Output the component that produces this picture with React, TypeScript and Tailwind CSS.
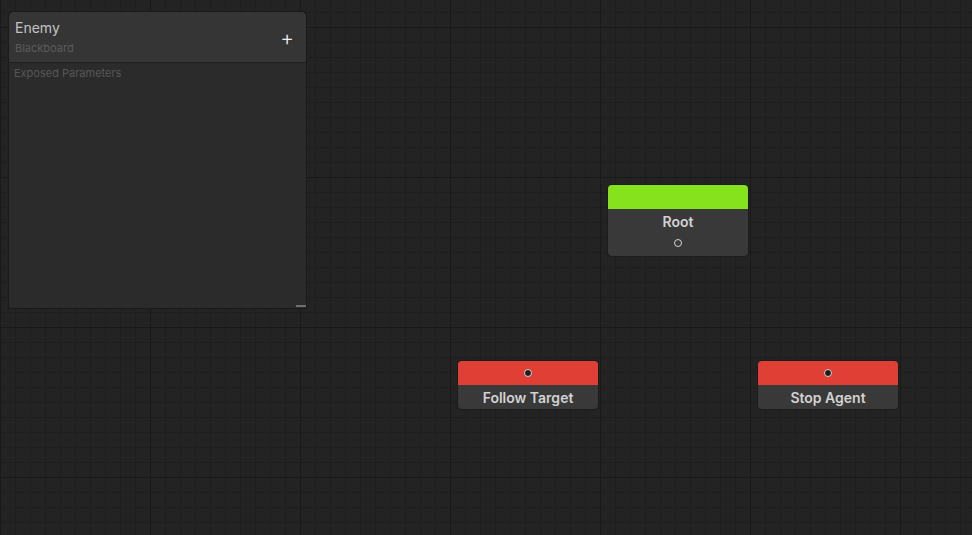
import type { ReactNode } from "react";

const font = "font-['Inter','Noto_Sans',sans-serif]";

/** Grid canvas: minor lines every 15px, major every 150px. */
const grid =
  "[background-color:#232323] " +
  "[background-image:linear-gradient(to_right,#191919_1px,transparent_1px),linear-gradient(to_bottom,#191919_1px,transparent_1px),linear-gradient(to_right,#1e1e1e_1px,transparent_1px),linear-gradient(to_bottom,#1e1e1e_1px,transparent_1px)] " +
  "[background-size:150px_150px,150px_150px,15px_15px,15px_15px] " +
  "[background-position:0_27px,0_27px,0_12px,0_12px]";

function Port({ filled }: { filled?: boolean }) {
  return (
    <span
      className={`block h-[8px] w-[8px] rounded-full border border-[#d4d4d4] ${filled ? "bg-[#1c1c1c]" : "bg-transparent"}`}
    />
  );
}

function Node({
  x,
  y,
  color,
  title,
  input,
  output,
}: {
  x: number;
  y: number;
  color: string;
  title: string;
  input?: boolean;
  output?: boolean;
}) {
  return (
    <div
      className="absolute w-[140px] overflow-hidden rounded-[4px] bg-[#393939] shadow-[0_0_0_1px_#1c1c1c]"
      style={{ left: x, top: y }}
    >
      <div className={`flex h-[24px] items-center justify-center ${color}`}>{input && <Port filled />}</div>
      <div className="flex h-[24px] items-center justify-center pt-[2px]">
        <span className="text-[14px] font-semibold leading-none text-[#d2d2d2]">{title}</span>
      </div>
      {output && (
        <div className="flex h-[23px] items-start justify-center pt-[6px]">
          <Port />
        </div>
      )}
    </div>
  );
}

function Blackboard({ children }: { children?: ReactNode }) {
  return (
    <div className="absolute left-[8px] top-[11px] flex h-[298px] w-[299px] flex-col rounded-t-[5px] rounded-b-[2px] border border-[#1a1a1a] bg-[#2b2b2b]">
      <div className="flex h-[51px] items-center rounded-t-[5px] border-b border-[#1e1e1e] bg-[#353535] pl-[6px] pr-[12px]">
        <div className="flex-1 -mt-[1px]">
          <p className="text-[14px] leading-[18px] text-[#c4c4c4]">Enemy</p>
          <p className="mt-[4px] text-[11px] leading-[14px] text-[#5b5b5b]">Blackboard</p>
        </div>
        <span className="text-[21px] font-light leading-none text-[#eeeeee]">+</span>
      </div>
      <div className="flex-1 px-[5px] pt-[3px]">
        <p className="text-[11px] leading-[14px] text-[#575757]">Exposed Parameters</p>
        {children}
      </div>
      <div className="flex h-[3px] justify-end">
        <span className="h-[2px] w-[10px] bg-[#6f6f6f]" />
      </div>
    </div>
  );
}

export default function App() {
  return (
    <div className={`relative h-[535px] w-[972px] overflow-hidden ${grid} ${font}`}>
      <Blackboard />
      <Node x={608} y={185} color="bg-[#87e21e]" title="Root" output />
      <Node x={458} y={361} color="bg-[#df3f35]" title="Follow Target" input />
      <Node x={758} y={361} color="bg-[#df3f35]" title="Stop Agent" input />
    </div>
  );
}
